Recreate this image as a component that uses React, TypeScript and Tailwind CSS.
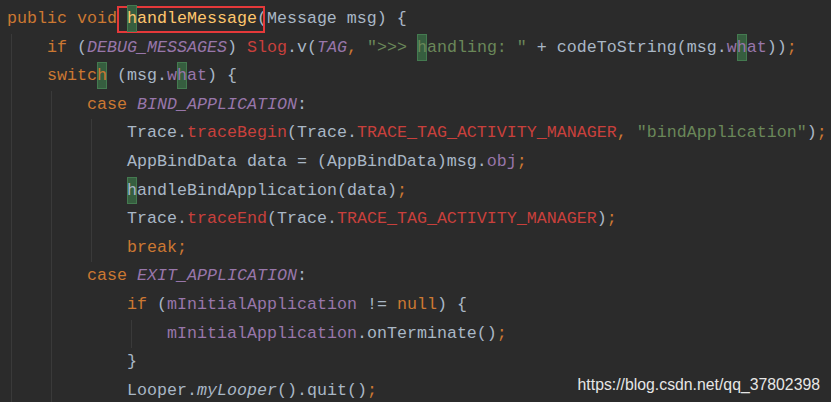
import React from "react";

type Seg = { t: string; c?: string; i?: boolean; hl?: number; box?: boolean };

const K = "#cc7832";
const N = "#a9b7c6";
const P = "#9876aa";
const S = "#6a8759";
const R = "#c8403c";
const Y = "#ffc66d";

const L: Record<string, Seg[]> = {
  l1: [
    { t: "public void ", c: K },
    { t: "handleMessage", c: Y, hl: 0, box: true },
    { t: "(Message msg) {", c: N },
  ],
  l2: [
    { t: "if", c: K },
    { t: " (", c: N },
    { t: "DEBUG_MESSAGES", c: P, i: true },
    { t: ") ", c: N },
    { t: "Slog", c: R },
    { t: ".v(", c: N },
    { t: "TAG", c: P, i: true },
    { t: ",", c: K },
    { t: " " },
    { t: "\">>> ", c: S },
    { t: "handling: \"", c: S, hl: 0 },
    { t: " + codeToString(msg.", c: N },
    { t: "what", c: P, hl: 1 },
    { t: "))", c: N },
    { t: ";", c: K },
  ],
  l3: [
    { t: "switch", c: K, hl: 5 },
    { t: " (msg.", c: N },
    { t: "what", c: P, hl: 1 },
    { t: ") {", c: N },
  ],
  l4: [
    { t: "case ", c: K },
    { t: "BIND_APPLICATION", c: P, i: true },
    { t: ":", c: N },
  ],
  l5: [
    { t: "Trace.", c: N },
    { t: "traceBegin", c: R },
    { t: "(Trace.", c: N },
    { t: "TRACE_TAG_ACTIVITY_MANAGER", c: R },
    { t: ",", c: K },
    { t: " " },
    { t: "\"bindApplication\"", c: S },
    { t: ")", c: N },
    { t: ";", c: K },
  ],
  l6: [
    { t: "AppBindData data = (AppBindData)msg.", c: N },
    { t: "obj", c: P },
    { t: ";", c: K },
  ],
  l7: [
    { t: "handleBindApplication(data)", c: N, hl: 0 },
    { t: ";", c: K },
  ],
  l8: [
    { t: "Trace.", c: N },
    { t: "traceEnd", c: R },
    { t: "(Trace.", c: N },
    { t: "TRACE_TAG_ACTIVITY_MANAGER", c: R },
    { t: ")", c: N },
    { t: ";", c: K },
  ],
  l9: [{ t: "break;", c: K }],
  l10: [
    { t: "case ", c: K },
    { t: "EXIT_APPLICATION", c: P, i: true },
    { t: ":", c: N },
  ],
  l11: [
    { t: "if", c: K },
    { t: " (", c: N },
    { t: "mInitialApplication", c: P },
    { t: " != ", c: N },
    { t: "null", c: K },
    { t: ") {", c: N },
  ],
  l12: [
    { t: "mInitialApplication", c: P },
    { t: ".onTerminate()", c: N },
    { t: ";", c: K },
  ],
  l13: [{ t: "}", c: N }],
  l14: [
    { t: "Looper.", c: N },
    { t: "myLooper", c: N, i: true },
    { t: "().quit()", c: N },
    { t: ";", c: K },
  ],
};

function Hl({ ch }: { ch: string }) {
  return (
    <span className="relative">
      <span className="absolute left-0 right-0 top-[-4px] bottom-[-4px] bg-[#365e3f] border border-[#447a50]" />
      <span className="relative">{ch}</span>
    </span>
  );
}

function SegView({ s }: { s: Seg }) {
  const style = { color: s.c ?? N };
  const cls = s.i ? "italic" : "";
  let inner: React.ReactNode = s.t;
  if (s.hl !== undefined) {
    const k = s.hl;
    inner = (
      <>
        {s.t.slice(0, k)}
        <Hl ch={s.t[k]} />
        {s.t.slice(k + 1)}
      </>
    );
  }
  if (s.box) {
    return (
      <span className={`relative ${cls}`} style={style}>
        <span className="absolute left-[-10px] right-[-8px] top-[-3px] bottom-[-5px] border-2 border-[#e5393a]" />
        {inner}
      </span>
    );
  }
  return (
    <span className={cls} style={style}>
      {inner}
    </span>
  );
}

function Line({ id }: { id: string }) {
  return (
    <div className="h-[28.6px] whitespace-pre">
      {L[id].map((s, j) => (
        <SegView key={j} s={s} />
      ))}
    </div>
  );
}

function Guided({ children }: { children: React.ReactNode }) {
  return (
    <div className="ml-[4px] border-l border-[#3a3a3a] pl-[35px] flex flex-col">
      {children}
    </div>
  );
}

export default function App() {
  return (
    <div className="relative w-[831px] h-[402px] overflow-hidden bg-[#2b2b2b]">
      <div
        className="flex flex-col pl-[7px] pt-[5px] text-[16.667px] leading-[28.6px]"
        style={{ fontFamily: '"Liberation Mono", monospace' }}
      >
        <Line id="l1" />
        <Guided>
          <Line id="l2" />
          <Line id="l3" />
          <Guided>
            <Line id="l4" />
            <Guided>
              <Line id="l5" />
              <Line id="l6" />
              <Line id="l7" />
              <Line id="l8" />
              <Line id="l9" />
            </Guided>
            <Line id="l10" />
            <div className="pl-[40px] flex flex-col">
              <Line id="l11" />
              <Guided>
                <Line id="l12" />
              </Guided>
              <Line id="l13" />
              <Line id="l14" />
            </div>
          </Guided>
        </Guided>
      </div>
      <div
        className="absolute right-[11px] bottom-[9px] text-[15.8px] leading-none text-[#e6e6e6]"
        style={{ fontFamily: '"Liberation Sans", Arial, sans-serif' }}
      >
        https://blog.csdn.net/qq_37802398
      </div>
    </div>
  );
}
